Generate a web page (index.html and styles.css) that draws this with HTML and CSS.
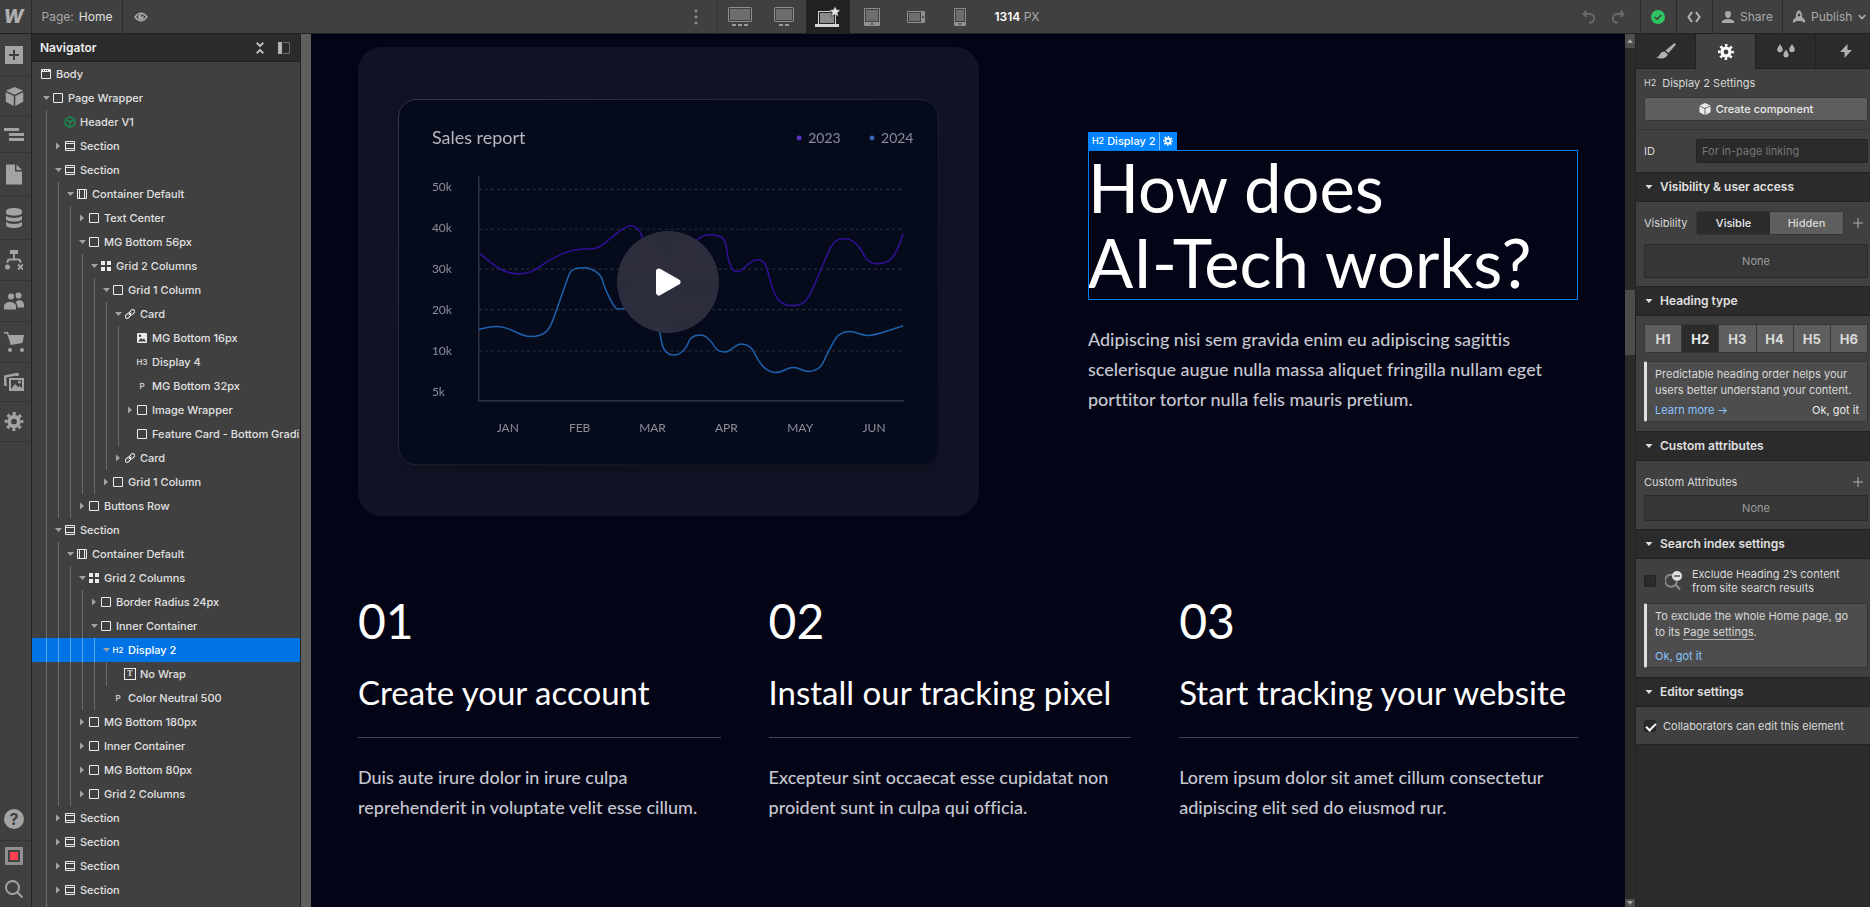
FILE: index.html
```
<!DOCTYPE html>
<html lang="en">

<head>
    <meta charset="UTF-8">
    <meta name="viewport" content="width=device-width, initial-scale=1.0">
    <title>Designer - Home</title>
    <link rel="stylesheet" href="styles.css">
</head>

<body>
    <!-- Shared icons -->
    <svg class="sprite" xmlns="http://www.w3.org/2000/svg">
        <symbol id="open" viewBox="0 0 12 10"><path d="M2 3h7L5.500 7z" fill="#a3a3a3"/></symbol>
        <symbol id="closed" viewBox="0 0 12 10"><path d="M3 1.500v7L7 5z" fill="#a3a3a3"/></symbol>
        <symbol id="box" viewBox="0 0 10 10"><path d="M.5.5h9v9h-9z" fill="none" stroke="#ebebeb"/></symbol>
        <symbol id="page-body" viewBox="0 0 10 10"><path d="M.5.5h9v9h-9z M0 2.500h10" fill="none" stroke="#ebebeb"/><path d="M1 1h8v1H1z" fill="#ebebeb"/><path d="M2 1h1v1H2zM4 1h1v1H4zM6 1h1v1H6z" fill="#404040"/></symbol>
        <symbol id="section" viewBox="0 0 10 10"><path d="M.5.5h9v9h-9z M1 2.500h8 M1 7.500h8" fill="none" stroke="#ebebeb"/></symbol>
        <symbol id="container" viewBox="0 0 10 10"><path d="M.5.5h9v9h-9z M2.500 1v8 M7.500 1v8" fill="none" stroke="#ebebeb"/></symbol>
        <symbol id="grid" viewBox="0 0 10 10"><path d="M0 0h4v4H0zM6 0h4v4H6zM0 6h4v4H0zM6 6h4v4H6z" fill="#ebebeb"/></symbol>
        <symbol id="link" viewBox="0 0 10 10"><g fill="none" stroke="#ebebeb"><rect x="4" y="1.500" width="6" height="3.600" rx="1.800" transform="rotate(-45 7 3.300)"/><rect x="0" y="4.900" width="6" height="3.600" rx="1.800" transform="rotate(-45 3 6.700)"/><path d="M3.600 6.400l2.800-2.800"/></g></symbol>
        <symbol id="image" viewBox="0 0 10 10"><rect width="10" height="10" rx="1" fill="#ebebeb"/><path d="M1 8.500l3-3.500 1.500 1.500L7 5.500l2 3z" fill="#404040"/><circle cx="3" cy="2.800" r="1.200" fill="#404040"/></symbol>
        <symbol id="cube-line" viewBox="0 0 12 12"><path d="M6 .7l4.700 2.600v5.400L6 11.300 1.300 8.700V3.300zM3 4.200l3 1.600 3-1.600M6 5.800v3.400" fill="none" stroke="#0f9d58" stroke-width="1.200"/></symbol>
        <symbol id="cube" viewBox="0 0 20 20"><path d="M10 0l9 4-9 4.200L1 4zM.800 5.600L9.200 9.600V20L.8 15.500zM19.200 5.600L10.800 9.600V20l8.400-4.500z" fill="currentColor"/></symbol>
        <symbol id="gear" viewBox="0 0 20 20"><g fill="none" stroke="currentColor"><circle cx="10" cy="10" r="5" stroke-width="4"/><circle cx="10" cy="10" r="8.300" stroke-width="3.200" stroke-dasharray="3.260 3.260" stroke-dashoffset="1.630"/></g></symbol>
        <symbol id="caret" viewBox="0 0 8 6"><path d="M.5 1h7L4 5z" fill="#e0e0e0"/></symbol>
        <symbol id="plus" viewBox="0 0 10 10"><path d="M5 0v10M0 5h10" stroke="#b0b0b0"/></symbol>
    </svg>

    <header class="topbar">
        <div class="bar-group">
            <button class="logo" aria-label="Home">W</button>
            <button class="page-name">Page: <span>Home</span></button>
            <button class="preview" aria-label="Preview">
                <svg width="14" height="10" viewBox="0 0 14 10"><path d="M1 5Q7-2.500 13 5Q7 12.500 1 5z" fill="none" stroke="#a8a8a8" stroke-width="1.600"/><circle cx="7" cy="5" r="2.800" fill="#a8a8a8"/><circle cx="8" cy="3.800" r="1" fill="#404040"/></svg>
            </button>
        </div>

        <div class="bar-group">
            <button class="device more" aria-label="More">
                <svg width="4" height="16" viewBox="0 0 4 16" fill="#8a8a8a"><circle cx="2" cy="2" r="1.500"/><circle cx="2" cy="8" r="1.500"/><circle cx="2" cy="14" r="1.500"/></svg>
            </button>
            <button class="device" aria-label="Extra large">
                <svg width="24" height="20" viewBox="0 0 24 20"><rect x=".5" y=".5" width="23" height="14" rx="1" fill="#6e6e6e" stroke="#8f8f8f"/><path d="M1.500 1.500h21v12h-21z" fill="none" stroke="#404040"/><path d="M4 18h4M10 18h4M16 18h4" stroke="#9a9a9a" stroke-width="2"/></svg>
            </button>
            <button class="device" aria-label="Large">
                <svg width="20" height="20" viewBox="0 0 20 20"><rect x=".5" y=".5" width="19" height="14" rx="1" fill="#6e6e6e" stroke="#8f8f8f"/><path d="M1.500 1.500h17v12h-17z" fill="none" stroke="#404040"/><path d="M5 18h4M11 18h4" stroke="#9a9a9a" stroke-width="2"/></svg>
            </button>
            <button class="device active" aria-label="Desktop">
                <svg width="26" height="22" viewBox="0 0 26 22"><rect x="3.500" y="5.500" width="17" height="13" fill="#8a8a8a" stroke="#d5d5d5"/><path d="M4.500 6.500h15v11h-15z" fill="none" stroke="#222"/><path d="M0 18h24v3H0z" fill="#d5d5d5"/><path d="M20 0l1.700 3.500 3.800.5-2.800 2.700.7 3.800-3.400-1.800-3.400 1.800.7-3.800L14.500 4l3.800-.5z" fill="#e0e0e0" stroke="#222" stroke-width=".6"/></svg>
            </button>
            <button class="device" aria-label="Tablet">
                <svg width="16" height="18" viewBox="0 0 16 18"><rect width="16" height="18" rx="1" fill="#8f8f8f"/><rect x="1.500" y="1.500" width="13" height="12" fill="#6e6e6e" stroke="#404040"/><circle cx="8" cy="16" r="1" fill="#404040"/></svg>
            </button>
            <button class="device" aria-label="Mobile landscape">
                <svg width="18" height="12" viewBox="0 0 18 12"><rect width="18" height="12" rx="1" fill="#8f8f8f"/><rect x="1.500" y="1.500" width="12" height="9" fill="#6e6e6e" stroke="#404040"/><circle cx="16" cy="6" r="1" fill="#404040"/></svg>
            </button>
            <button class="device" aria-label="Mobile portrait">
                <svg width="12" height="18" viewBox="0 0 12 18"><rect width="12" height="18" rx="1" fill="#8f8f8f"/><rect x="1.500" y="1.500" width="9" height="12" fill="#6e6e6e" stroke="#404040"/><circle cx="6" cy="16" r="1" fill="#404040"/></svg>
            </button>
            <div class="canvas-size"><b>1314</b> PX</div>
        </div>

        <div class="bar-group">
            <button class="history" aria-label="Undo">
                <svg width="14" height="14" viewBox="0 0 14 14"><path d="M4.500 1L1.500 4l3 3M1.500 4H8a4 4 0 0 1 0 8.500H7" fill="none" stroke="#6b6b6b" stroke-width="1.800"/></svg>
            </button>
            <button class="history" aria-label="Redo">
                <svg width="14" height="14" viewBox="0 0 14 14"><path d="M9.500 1l3 3-3 3M12.500 4H6a4 4 0 0 0 0 8.500h1" fill="none" stroke="#6b6b6b" stroke-width="1.800"/></svg>
            </button>
            <button class="tool" aria-label="Saved">
                <svg width="14" height="14" viewBox="0 0 14 14"><circle cx="7" cy="7" r="7" fill="#2fc45f"/><path d="M3.800 7l2.300 2.300L10.200 5" fill="none" stroke="#404040" stroke-width="1.600"/></svg>
            </button>
            <button class="tool" aria-label="Export code">
                <svg width="14" height="12" viewBox="0 0 14 12"><path d="M5 1L1.500 6 5 11M9 1l3.500 5L9 11" fill="none" stroke="#b5b5b5" stroke-width="2"/></svg>
            </button>
            <button class="tool share">
                <svg width="12" height="12" viewBox="0 0 12 12"><path d="M6 0a3 3 0 0 1 3 3.200C9 5.300 7.600 7 6 7S3 5.300 3 3.200A3 3 0 0 1 6 0zM0 12V10q2-2 6-2t6 2v2z" fill="#a8a8a8"/></svg>
                Share
            </button>
            <button class="tool publish">
                <svg width="12" height="13" viewBox="0 0 12 13"><path d="M6 0c2.500 1.500 3.500 4 3 7l3 3v3L8.500 11h-5L0 13v-3l3-3C2.500 4 3.500 1.500 6 0z" fill="#a8a8a8"/><circle cx="6" cy="5" r="1.400" fill="#404040"/></svg>
                Publish
                <svg width="8" height="6" viewBox="0 0 8 6"><path d="M.7 1L4 4.500 7.300 1" fill="none" stroke="#a8a8a8" stroke-width="1.800"/></svg>
            </button>
        </div>
    </header>

    <div class="workspace">
        <nav class="rail">
            <button aria-label="Add"><svg width="18" height="22" viewBox="0 0 18 18"><path d="M0 0h18v18H0z" fill="#a3a3a3"/><path d="M9 4v10M4 9h10" stroke="#404040" stroke-width="2"/></svg></button>
            <button aria-label="Components"><svg width="19" height="19"><use href="#cube"/></svg></button>
            <button aria-label="Navigator"><svg width="20" height="15" viewBox="0 0 20 13"><path d="M0 1.500h15M5 6.500h15M5 11.500h15" stroke="#a3a3a3" stroke-width="3"/></svg></button>
            <button aria-label="Pages"><svg width="16" height="23" viewBox="0 0 16 20"><path d="M0 0h9v7h7v13H0zM10.500 0L16 5.500h-5.500z" fill="#a3a3a3"/></svg></button>
            <button aria-label="CMS"><svg width="16" height="22" viewBox="0 0 16 20"><path d="M0 3c0-4 16-4 16 0v2c0 3.500-16 3.500-16 0zM0 8c3 2.500 13 2.500 16 0v3c0 3.500-16 3.500-16 0zM0 14c3 2.500 13 2.500 16 0v3c0 4-16 4-16 0z" fill="#a3a3a3"/></svg></button>
            <button aria-label="Logic"><svg width="18" height="20" viewBox="0 0 18 20"><path d="M5 0h8v4H5z" fill="#a3a3a3"/><path d="M9 4v5M2.500 13v-1q0-2.500 2.500-2.500h8q2.500 0 2.500 2.500v1M13 14.500l5 5M18 14.500l-5 5" fill="none" stroke="#a3a3a3" stroke-width="1.800"/><circle cx="2.500" cy="17" r="2.500" fill="#a3a3a3"/></svg></button>
            <button aria-label="Users"><svg width="20" height="20" viewBox="0 0 20 17" fill="#a3a3a3"><circle cx="7" cy="4" r="3"/><circle cx="14.500" cy="3" r="3"/><path d="M0 17v-3c0-6 12-6 12 0v3zM13.500 15c0-3-1-4.500-2-5.500C15 6 20 8 20 12v3z"/></svg></button>
            <button aria-label="Ecommerce"><svg width="20" height="20" viewBox="0 0 20 20"><path d="M0 0h4l1 3h15l-1.500 8L6.500 13 6 10 3 1.500H0z" fill="#a3a3a3"/><circle cx="6" cy="18" r="2" fill="#a3a3a3"/><circle cx="18" cy="18" r="2" fill="#a3a3a3"/></svg></button>
            <button aria-label="Assets"><svg width="20" height="18" viewBox="0 0 20 18"><path d="M1.500 13L1 3.500 13.500 1v2" fill="none" stroke="#a3a3a3" stroke-width="2.500"/><path d="M6 6h13v11H6z" fill="none" stroke="#a3a3a3" stroke-width="2"/><path d="M7 16l4-5 3 3 2-1 3 3.500z" fill="#a3a3a3"/><circle cx="15.500" cy="9" r="1.500" fill="#a3a3a3"/></svg></button>
            <button aria-label="Settings"><svg width="20" height="19"><use href="#gear"/></svg></button>
            <div class="rail-bottom">
                <button class="help" aria-label="Help"><span>?</span></button>
                <button aria-label="Record"><svg width="18" height="18" viewBox="0 0 18 18"><rect width="18" height="18" rx="1" fill="#8f8f8f"/><path d="M3 3h12v12H3z" fill="#444"/><path d="M5 5h8v8H5z" fill="#ff424f"/></svg></button>
                <button aria-label="Search"><svg width="18" height="18" viewBox="0 0 18 18"><circle cx="7.500" cy="7.500" r="6.500" fill="none" stroke="#a3a3a3" stroke-width="2"/><path d="M12 12l5.500 5.500" stroke="#a3a3a3" stroke-width="2"/></svg></button>
            </div>
        </nav>

        <aside class="navigator">
            <div class="navigator-head">
                <h2>Navigator</h2>
                <button aria-label="Collapse all"><svg width="8" height="12" viewBox="0 0 8 12"><path d="M.7.700L4 4 7.300.7M.7 11.300L4 8l3.300 3.300" fill="none" stroke="#b5b5b5" stroke-width="2"/></svg></button>
                <button aria-label="Pin"><svg width="12" height="12" viewBox="0 0 12 12"><path d="M0 0h4v12H0z" fill="#b5b5b5"/><path d="M5 .5h6.500v11H5" fill="none" stroke="#6e6e6e"/></svg></button>
            </div>
            <ul class="tree">
                <li class="d0"><svg><use href="#page-body"/></svg>Body</li>
                <li class="d0"><svg class="arrow"><use href="#open"/></svg><svg><use href="#box"/></svg>Page Wrapper</li>
                <li class="d1"><svg class="arrow"></svg><svg class="component"><use href="#cube-line"/></svg>Header V1</li>
                <li class="d1"><svg class="arrow"><use href="#closed"/></svg><svg><use href="#section"/></svg>Section</li>
                <li class="d1"><svg class="arrow"><use href="#open"/></svg><svg><use href="#section"/></svg>Section</li>
                <li class="d2"><svg class="arrow"><use href="#open"/></svg><svg><use href="#container"/></svg>Container Default</li>
                <li class="d3"><svg class="arrow"><use href="#closed"/></svg><svg><use href="#box"/></svg>Text Center</li>
                <li class="d3"><svg class="arrow"><use href="#open"/></svg><svg><use href="#box"/></svg>MG Bottom 56px</li>
                <li class="d4"><svg class="arrow"><use href="#open"/></svg><svg><use href="#grid"/></svg>Grid 2 Columns</li>
                <li class="d5"><svg class="arrow"><use href="#open"/></svg><svg><use href="#box"/></svg>Grid 1 Column</li>
                <li class="d6"><svg class="arrow"><use href="#open"/></svg><svg><use href="#link"/></svg>Card</li>
                <li class="d7"><svg class="arrow"></svg><svg><use href="#image"/></svg>MG Bottom 16px</li>
                <li class="d7"><svg class="arrow"></svg><i>H3</i>Display 4</li>
                <li class="d7"><svg class="arrow"></svg><i>P</i>MG Bottom 32px</li>
                <li class="d7"><svg class="arrow"><use href="#closed"/></svg><svg><use href="#box"/></svg>Image Wrapper</li>
                <li class="d7"><svg class="arrow"></svg><svg><use href="#box"/></svg>Feature Card - Bottom Gradi</li>
                <li class="d6"><svg class="arrow"><use href="#closed"/></svg><svg><use href="#link"/></svg>Card</li>
                <li class="d5"><svg class="arrow"><use href="#closed"/></svg><svg><use href="#box"/></svg>Grid 1 Column</li>
                <li class="d3"><svg class="arrow"><use href="#closed"/></svg><svg><use href="#box"/></svg>Buttons Row</li>
                <li class="d1"><svg class="arrow"><use href="#open"/></svg><svg><use href="#section"/></svg>Section</li>
                <li class="d2"><svg class="arrow"><use href="#open"/></svg><svg><use href="#container"/></svg>Container Default</li>
                <li class="d3"><svg class="arrow"><use href="#open"/></svg><svg><use href="#grid"/></svg>Grid 2 Columns</li>
                <li class="d4"><svg class="arrow"><use href="#closed"/></svg><svg><use href="#box"/></svg>Border Radius 24px</li>
                <li class="d4"><svg class="arrow"><use href="#open"/></svg><svg><use href="#box"/></svg>Inner Container</li>
                <li class="d5 selected"><svg class="arrow"><use href="#open"/></svg><i>H2</i>Display 2</li>
                <li class="d6"><svg class="arrow"></svg><i class="boxed">T</i>No Wrap</li>
                <li class="d5"><svg class="arrow"></svg><i>P</i>Color Neutral 500</li>
                <li class="d3"><svg class="arrow"><use href="#closed"/></svg><svg><use href="#box"/></svg>MG Bottom 180px</li>
                <li class="d3"><svg class="arrow"><use href="#closed"/></svg><svg><use href="#box"/></svg>Inner Container</li>
                <li class="d3"><svg class="arrow"><use href="#closed"/></svg><svg><use href="#box"/></svg>MG Bottom 80px</li>
                <li class="d3"><svg class="arrow"><use href="#closed"/></svg><svg><use href="#box"/></svg>Grid 2 Columns</li>
                <li class="d1"><svg class="arrow"><use href="#closed"/></svg><svg><use href="#section"/></svg>Section</li>
                <li class="d1"><svg class="arrow"><use href="#closed"/></svg><svg><use href="#section"/></svg>Section</li>
                <li class="d1"><svg class="arrow"><use href="#closed"/></svg><svg><use href="#section"/></svg>Section</li>
                <li class="d1"><svg class="arrow"><use href="#closed"/></svg><svg><use href="#section"/></svg>Section</li>
                <li class="d1"></li>
            </ul>
        </aside>

        <main class="canvas">
            <section class="intro">
                <div class="video-card">
                    <svg class="chart" viewBox="0 0 542 367">
                        <defs>
                            <linearGradient id="edge" x1="0" y1="0" x2="1" y2="1">
                                <stop offset="0" stop-color="#35374a"/>
                                <stop offset="1" stop-color="#0b1020"/>
                            </linearGradient>
                        </defs>
                        <rect x=".5" y=".5" width="541" height="366" rx="18" fill="#060b1c" stroke="url(#edge)"/>
                        <text class="chart-title" x="34" y="45">Sales report</text>
                        <circle cx="402" cy="39" r="2.500" fill="#5b2fc0"/>
                        <text class="legend" x="411" y="44">2023</text>
                        <circle cx="475" cy="39" r="2.500" fill="#3462bd"/>
                        <text class="legend" x="484" y="44">2024</text>
                        <g class="ticks">
                            <text x="34" y="92">50k</text>
                            <text x="34" y="133">40k</text>
                            <text x="34" y="174">30k</text>
                            <text x="34" y="215">20k</text>
                            <text x="34" y="257">10k</text>
                            <text x="34" y="298">5k</text>
                        </g>
                        <path d="M81 90.500H507M81 130.500H507M81 170.500H507M81 211H507M81 252.500H507" stroke="#2b2d3b" stroke-width="1.200" stroke-dasharray="3 3"/>
                        <path d="M81 77V302.500H507" fill="none" stroke="#3a3c4b" stroke-width="1.200"/>
                        <path d="M82 155C92 162 102 175 120 175S140 168 151 162S172 151 184 150.500S198 151 205 146S226 127 233 127S244 134 245 140C248 160 255 172 270 172S292 136 312 136S328 148 331 160S337 173 341 173S352 161 360 161S369 167 373 182S381 207 395 207S411 199 415 191S430 155 434 148S441 140 448 140S462 147 465 153S471 165 481 165S498 162 506 135" fill="none" stroke="#320f97" stroke-width="1.500"/>
                        <path d="M81 231C88 229 92 228 98 228C115 228 120 238 133 238S151 233 155 222S168 185 171 177S181 169 187 169S203 174 205 182S214 204 217 208S222 210 227 210S237 192 244 192S257 198 259 212S263 240 265 247S271 256.500 277 256.500S289 250 291 244S297 236.500 303 236.500S315 244 317 248S323 253.500 328 253.500S338 245.500 344 245.500S355 249 358 256S368 274 378 274S388 269 396 269S404 273 412 273S424 269 427 262S438 240 440 238S447 233 453 233S463 237 471 237S490 232 506 227.500" fill="none" stroke="#1e62ae" stroke-width="1.500"/>
                        <g class="ticks months">
                            <text x="110" y="334">JAN</text>
                            <text x="182" y="334">FEB</text>
                            <text x="255" y="334">MAR</text>
                            <text x="329" y="334">APR</text>
                            <text x="403" y="334">MAY</text>
                            <text x="477" y="334">JUN</text>
                        </g>
                    </svg>
                    <button class="play" aria-label="Play">
                        <svg width="26" height="28" viewBox="0 0 26 28"><path d="M4 3.500L22.500 14 4 24.500z" fill="#fff" stroke="#fff" stroke-width="6" stroke-linejoin="round"/></svg>
                    </button>
                </div>
                <div class="intro-text">
                    <div class="selection">
                        <div class="selection-tag"><span>H2</span> Display 2 <button aria-label="Element settings"><svg width="10" height="10"><use href="#gear"/></svg></button></div>
                        <h1>How does<br>AI-Tech works?</h1>
                    </div>
                    <p>Adipiscing nisi sem gravida enim eu adipiscing sagittis<br>scelerisque augue nulla massa aliquet fringilla nullam eget<br>porttitor tortor nulla felis mauris pretium.</p>
                </div>
            </section>

            <section class="steps">
                <div class="step">
                    <div class="number">01</div>
                    <h3>Create your account</h3>
                    <p>Duis aute irure dolor in irure culpa<br>reprehenderit in voluptate velit esse cillum.</p>
                </div>
                <div class="step">
                    <div class="number">02</div>
                    <h3>Install our tracking pixel</h3>
                    <p>Excepteur sint occaecat esse cupidatat non<br>proident sunt in culpa qui officia.</p>
                </div>
                <div class="step">
                    <div class="number">03</div>
                    <h3>Start tracking your website</h3>
                    <p>Lorem ipsum dolor sit amet cillum consectetur<br>adipiscing elit sed do eiusmod rur.</p>
                </div>
            </section>
        </main>

        <div class="scrollbar">
            <div class="scroll-end"><svg width="6" height="4" viewBox="0 0 6 4"><path d="M0 4h6L3 0z" fill="#a3a3a3"/></svg></div>
            <div class="thumb"></div>
            <div class="scroll-end"><svg width="6" height="4" viewBox="0 0 6 4"><path d="M0 0h6L3 4z" fill="#a3a3a3"/></svg></div>
        </div>

        <aside class="settings">
            <div class="tabs">
                <button aria-label="Style"><svg width="20" height="16" viewBox="0 0 20 16"><path d="M18.500 0L20 1.500 12.500 10 9.500 7.500zM8.500 8.500l3.300 2.800C11 15 6 17 0 14.500c3-.5 3-2 4-3.500s3-3 4.500-2.500z" fill="#b0b0b0"/></svg></button>
                <button class="active" aria-label="Settings"><svg width="16" height="16"><use href="#gear"/></svg></button>
                <button aria-label="Style manager"><svg width="18" height="14" viewBox="0 0 18 14" fill="#b0b0b0"><path d="M3 0c1.500 2.500 2.800 4 2.800 5.500a2.800 2.800 0 0 1-5.600 0C.2 4 1.500 2.500 3 0zM15 0c1.500 2.500 2.800 4 2.800 5.500a2.800 2.800 0 0 1-5.600 0C12.200 4 13.500 2.500 15 0zM9 5.500c1.500 2.500 2.600 3.800 2.600 5.300a2.600 2.600 0 0 1-5.200 0C6.400 9.300 7.500 8 9 5.500z"/></svg></button>
                <button aria-label="Interactions"><svg width="12" height="14" viewBox="0 0 12 14"><path d="M7.500 0L0 8h4.500v6L12 6H7.500z" fill="#b0b0b0"/></svg></button>
            </div>

            <div class="panel element">
                <div class="element-name"><span>H2</span>Display 2 Settings</div>
                <button class="create"><svg width="12" height="12"><use href="#cube"/></svg>Create component</button>
            </div>
            <div class="panel field">
                <label for="element-id">ID</label>
                <input type="text" id="element-id" placeholder="For in-page linking">
            </div>

            <h4><svg width="8" height="6"><use href="#caret"/></svg>Visibility &amp; user access</h4>
            <div class="panel access">
                <div class="visibility">
                    <span>Visibility</span>
                    <div class="switch">
                        <button class="on">Visible</button>
                        <button>Hidden</button>
                    </div>
                    <button class="add" aria-label="Add condition"><svg width="10" height="10"><use href="#plus"/></svg></button>
                </div>
                <div class="none tall">None</div>
            </div>

            <h4><svg width="8" height="6"><use href="#caret"/></svg>Heading type</h4>
            <div class="panel">
                <div class="headings">
                    <button>H1</button>
                    <button class="on">H2</button>
                    <button>H3</button>
                    <button>H4</button>
                    <button>H5</button>
                    <button>H6</button>
                </div>
                <div class="hint">
                    <p>Predictable heading order helps your<br>users better understand your content.</p>
                    <div class="hint-links"><a href="#learn">Learn more →</a><button>Ok, got it</button></div>
                </div>
            </div>

            <h4><svg width="8" height="6"><use href="#caret"/></svg>Custom attributes</h4>
            <div class="panel">
                <div class="attributes">Custom Attributes <button class="add" aria-label="Add attribute"><svg width="10" height="10"><use href="#plus"/></svg></button></div>
                <div class="none">None</div>
            </div>

            <h4><svg width="8" height="6"><use href="#caret"/></svg>Search index settings</h4>
            <div class="panel">
                <label class="exclude">
                    <input type="checkbox">
                    <svg width="18" height="20" viewBox="0 0 18 20"><path d="M9 4.500a6 6 0 1 0 3 6M10.500 13.500l4.500 5" fill="none" stroke="#8a8a8a" stroke-width="2"/><circle cx="12" cy="5" r="5" fill="#e0e0e0"/><path d="M9 5h6" stroke="#555" stroke-width="1.500"/></svg>
                    <span>Exclude Heading 2’s content<br>from site search results</span>
                </label>
                <div class="hint">
                    <p>To exclude the whole Home page, go<br>to its <a class="inline" href="#page-settings">Page settings</a>.</p>
                    <div class="hint-links spaced"><a href="#ok">Ok, got it</a></div>
                </div>
            </div>

            <h4><svg width="8" height="6"><use href="#caret"/></svg>Editor settings</h4>
            <div class="panel last">
                <label class="collaborators"><input type="checkbox" checked>Collaborators can edit this element</label>
            </div>
        </aside>
    </div>
</body>

</html>
```
FILE: styles.css
```
* {
    box-sizing: border-box;
}

body {
    margin: 0;
    height: 100vh;
    display: flex;
    flex-direction: column;
    overflow: hidden;
    background: #2b2b2b;
    color: #d9d9d9;
    font-family: Inter, "Liberation Sans", sans-serif;
    font-size: 11px;
    line-height: 14px;
}

h1,
h2,
h3,
h4,
p,
ul {
    margin: 0;
    padding: 0;
}

button {
    display: flex;
    align-items: center;
    justify-content: center;
    padding: 0;
    border: none;
    background: none;
    color: inherit;
    font: inherit;
    cursor: pointer;
}

svg {
    display: block;
    flex: none;
}

.sprite {
    position: absolute;
    width: 0;
    height: 0;
}

/* Top bar */
.topbar {
    display: flex;
    justify-content: space-between;
    flex: none;
    height: 34px;
    background: #404040;
    border-bottom: 1px solid #222;
    color: #a8a8a8;
    font-size: 12px;
}

.bar-group {
    display: flex;
}

.logo {
    width: 32px;
    padding-right: 4px;
    border-right: 1px solid #2b2b2b;
    color: #b0b0b0;
    font-size: 19px;
    font-weight: 800;
    font-style: italic;
}

.page-name {
    gap: 5px;
    width: 91px;
    border-right: 1px solid #2b2b2b;
}

.page-name span {
    color: #e0e0e0;
}

.preview {
    width: 36px;
}

.device {
    width: 44px;
}

.device.more {
    border-right: 1px solid #363636;
}

.device.active {
    background: #222;
}

.canvas-size {
    align-self: center;
    padding: 0 20px 0 12px;
}

.canvas-size b {
    color: #fff;
    font-weight: 600;
}

.history {
    width: 29px;
}

.tool {
    gap: 6px;
    width: 36px;
    border-left: 1px solid #2b2b2b;
}

.history + .tool {
    margin-left: 7px;
}

.tool.share {
    width: 70px;
}

.tool.publish {
    justify-content: flex-start;
    width: 88px;
    padding-left: 10px;
}

/* Columns under the top bar */
.workspace {
    display: flex;
    flex: 1;
    min-height: 0;
}

.rail {
    display: flex;
    flex-direction: column;
    flex: none;
    width: 32px;
    background: #404040;
    border-right: 1px solid #222;
    color: #a3a3a3;
}

.rail button {
    padding: 10px 3px 10px 0;
    border-bottom: 1px solid #363636;
}

.rail-bottom {
    display: flex;
    flex-direction: column;
    margin-top: auto;
}

.rail .rail-bottom button {
    padding: 6px 3px 9px 0;
    border-bottom: none;
}

.rail .rail-bottom .help {
    padding-bottom: 11px;
    border-bottom: 1px solid #363636;
}

.help span {
    width: 20px;
    border-radius: 50%;
    background: #a3a3a3;
    color: #404040;
    font-size: 16px;
    font-weight: 700;
    line-height: 20px;
    text-align: center;
}

.navigator {
    flex: none;
    width: 269px;
    overflow: hidden;
    background: #404040;
    border-right: 1px solid #222;
}

.navigator-head {
    display: flex;
    align-items: center;
    gap: 14px;
    height: 28px;
    padding: 0 10px 0 8px;
    background: #2b2b2b;
    border-bottom: 1px solid #222;
}

.navigator-head h2 {
    flex: 1;
    color: #ebebeb;
    font-size: 12px;
    font-weight: 600;
}

.tree {
    list-style: none;
}

/* The vertical guides are painted once per nesting level */
.tree li {
    --depth: 0;
    display: flex;
    align-items: center;
    height: 24px;
    padding-left: calc(9px + var(--depth) * 12px);
    background: repeating-linear-gradient(to right, #6b6b6b 0 1px, transparent 1px 12px) 14px 0 / calc(var(--depth) * 12px) 100% no-repeat;
    color: #e0e0e0;
    font-weight: 500;
    white-space: nowrap;
}

.tree .d1 { --depth: 1; }
.tree .d2 { --depth: 2; }
.tree .d3 { --depth: 3; }
.tree .d4 { --depth: 4; }
.tree .d5 { --depth: 5; }
.tree .d6 { --depth: 6; }
.tree .d7 { --depth: 7; }

.tree li.selected {
    background-color: #0073e6;
    background-image: repeating-linear-gradient(to right, #5ba6f0 0 1px, transparent 1px 12px);
    color: #fff;
}

.tree svg {
    width: 10px;
    height: 10px;
    margin-right: 5px;
    overflow: visible;
}

.tree svg.arrow {
    width: 12px;
    margin-right: 0;
}

.tree svg.component {
    width: 12px;
    height: 12px;
    margin: 0 4px 0 -1px;
}

.tree i {
    flex: none;
    width: 10px;
    margin-right: 5px;
    font-size: 8px;
    font-style: normal;
    line-height: 10px;
    display: flex;
    justify-content: center;
}

.tree i.boxed {
    height: 10px;
    outline: 1px solid #ebebeb;
    font-family: "Liberation Serif", serif;
    font-weight: 700;
}

/* Canvas */
.canvas {
    flex: 1;
    min-width: 0;
    padding: 13px 47px 0;
    overflow: hidden;
    background: #030416;
    border-left: 10px solid #5e5e5e;
    color: #c6c7d0;
    font-family: Lato, "Open Sans", sans-serif;
    font-size: 18px;
    font-weight: 500;
    font-variant-ligatures: none;
    line-height: 30px;
}

.intro {
    display: grid;
    grid-template-columns: 1.267fr 1fr;
    align-items: center;
    gap: 109px;
}

.video-card {
    display: grid;
    place-items: center;
    padding: 52px 40px 51px;
    border-radius: 24px;
    background: #121324;
}

.video-card > * {
    grid-area: 1 / 1;
}

.chart {
    width: 100%;
    font-weight: 400;
    filter: drop-shadow(0 8px 8px rgba(5, 6, 20, 0.3));
}

.chart text {
    fill: #8b8d99;
    font-size: 12px;
}

.chart .chart-title {
    fill: #b4b6c0;
    font-size: 18px;
}

.chart .legend {
    font-size: 14px;
}

.months {
    text-anchor: middle;
}

.play {
    width: 102px;
    height: 102px;
    border-radius: 50%;
    background: rgba(52, 52, 66, 0.85);
    backdrop-filter: blur(5px);
}

.selection {
    position: relative;
    outline: 1px solid #007df0;
    outline-offset: -1px;
}

.selection-tag {
    position: absolute;
    bottom: 100%;
    left: 0;
    display: flex;
    align-items: center;
    gap: 3px;
    height: 18px;
    padding-left: 4px;
    background: #0084ff;
    color: #fff;
    font-family: Inter, "Liberation Sans", sans-serif;
    font-size: 11px;
    font-weight: 500;
}

.selection-tag span {
    font-size: 9px;
}

.selection-tag button {
    width: 18px;
    height: 18px;
    border-left: 1px solid #80c1ff;
}

h1 {
    color: #fff;
    font-size: 67px;
    font-weight: 400;
    line-height: 75px;
    white-space: nowrap;
}

.intro-text p {
    margin-top: 24px;
    white-space: nowrap;
}

.steps {
    display: grid;
    grid-template-columns: 1fr 1fr 1.1fr;
    gap: 48px;
    margin-top: 75px;
}

.number {
    color: #fff;
    font-size: 48px;
    font-weight: 400;
    line-height: 60px;
}

.step h3 {
    margin-top: 18px;
    padding-bottom: 22px;
    border-bottom: 1px solid #454655;
    color: #fff;
    font-size: 33px;
    font-weight: 400;
    line-height: 46px;
    white-space: nowrap;
}

.step p {
    margin-top: 24px;
}

/* Scrollbar */
.scrollbar {
    display: flex;
    flex-direction: column;
    justify-content: space-between;
    flex: none;
    width: 11px;
    background: #2b2b2b;
    border-right: 1px solid #222;
}

.scroll-end {
    display: flex;
    align-items: center;
    justify-content: center;
    height: 14px;
    background: #4d4d4d;
}

.scroll-end:last-child {
    height: 8px;
}

.thumb {
    height: 65px;
    margin-bottom: 302px;
    background: #4d4d4d;
}

/* Settings panel */
.settings {
    flex: none;
    width: 234px;
    overflow: hidden;
    background: #2b2b2b;
}

.tabs {
    display: flex;
    height: 35px;
}

.tabs button {
    flex: none;
    width: 60px;
    border-right: 1px solid #222;
    border-bottom: 1px solid #222;
}

.tabs .active {
    border-bottom: none;
    background: #404040;
    color: #fff;
}

.panel {
    padding: 8px 2px 8px 8px;
    background: #404040;
}

.panel.element {
    padding-top: 7px;
}

.panel.access {
    padding-top: 9px;
}

.element-name {
    display: flex;
    gap: 6px;
    padding-bottom: 7px;
}

.element-name span {
    font-size: 9px;
}

.create {
    gap: 5px;
    width: 100%;
    height: 24px;
    border: 1px solid #363636;
    border-radius: 2px;
    background: #5e5e5e;
    color: #ebebeb;
    font-weight: 500;
}

.panel.field {
    display: flex;
    align-items: center;
    padding-top: 9px;
    padding-bottom: 9px;
    border-top: 1px solid #363636;
}

.field label {
    width: 52px;
}

.field input {
    flex: 1;
    min-width: 0;
    height: 24px;
    padding: 0 5px;
    border: 1px solid #222;
    border-radius: 2px;
    background: #2b2b2b;
    color: #d9d9d9;
    font: inherit;
}

.field input::placeholder {
    color: #757575;
}

.settings h4 {
    display: flex;
    align-items: center;
    gap: 7px;
    height: 30px;
    padding-left: 9px;
    border-top: 1px solid #222;
    border-bottom: 1px solid #222;
    color: #e0e0e0;
    font-size: 12px;
    font-weight: 600;
}

.visibility {
    display: flex;
    align-items: center;
    margin-bottom: 9px;
}

.visibility span {
    width: 52px;
}

.switch {
    display: flex;
    width: 148px;
    height: 24px;
    border: 1px solid #363636;
    border-radius: 2px;
    background: #5e5e5e;
    font-weight: 500;
}

.switch button {
    flex: 1;
}

.switch .on,
.headings .on {
    background: #2b2b2b;
    color: #ebebeb;
}

.add {
    margin: 0 5px 0 auto;
}

.none {
    padding: 5px;
    border: 1px solid #2b2b2b;
    border-radius: 2px;
    background: #363636;
    color: #9e9e9e;
    text-align: center;
}

.none.tall {
    padding: 9px;
}

.headings {
    display: grid;
    grid-template-columns: repeat(6, 1fr);
    gap: 1px;
    height: 29px;
    margin-bottom: 8px;
    border: 1px solid #363636;
    background: #363636;
    font-size: 13px;
    font-weight: 700;
}

.headings button {
    background: #5e5e5e;
}

.hint {
    margin-bottom: 1px;
    padding: 4px 8px 3px 8px;
    border: 1px solid #363636;
    border-left: 3px solid #e0e0e0;
    border-radius: 2px;
    background: #4d4d4d;
    line-height: 16px;
    white-space: nowrap;
}

.hint a {
    color: #8ac2ff;
    text-decoration: none;
}

.hint .inline {
    border-bottom: 1px solid #b0b0b0;
    color: inherit;
}

.hint-links {
    display: flex;
    justify-content: space-between;
    margin-top: 4px;
}

.hint-links.spaced {
    margin-top: 8px;
}

.hint-links button {
    color: #ebebeb;
}

.attributes {
    display: flex;
    align-items: center;
    padding: 6px 0;
}

input[type="checkbox"] {
    flex: none;
    appearance: none;
    width: 12px;
    height: 12px;
    margin: 0;
    border: 1px solid #222;
    border-radius: 2px;
    background: #2b2b2b;
}

input[type="checkbox"]:checked::before {
    content: "";
    display: block;
    width: 4px;
    height: 8px;
    margin-left: 3px;
    border: solid #fff;
    border-width: 0 2px 2px 0;
    transform: rotate(45deg);
}

.exclude {
    display: flex;
    align-items: center;
    gap: 9px;
    margin-bottom: 8px;
    white-space: nowrap;
}

.panel.last {
    padding: 12px 2px 11px 8px;
    border-bottom: 1px solid #222;
}

.collaborators {
    display: flex;
    align-items: center;
    gap: 7px;
    white-space: nowrap;
}
```
